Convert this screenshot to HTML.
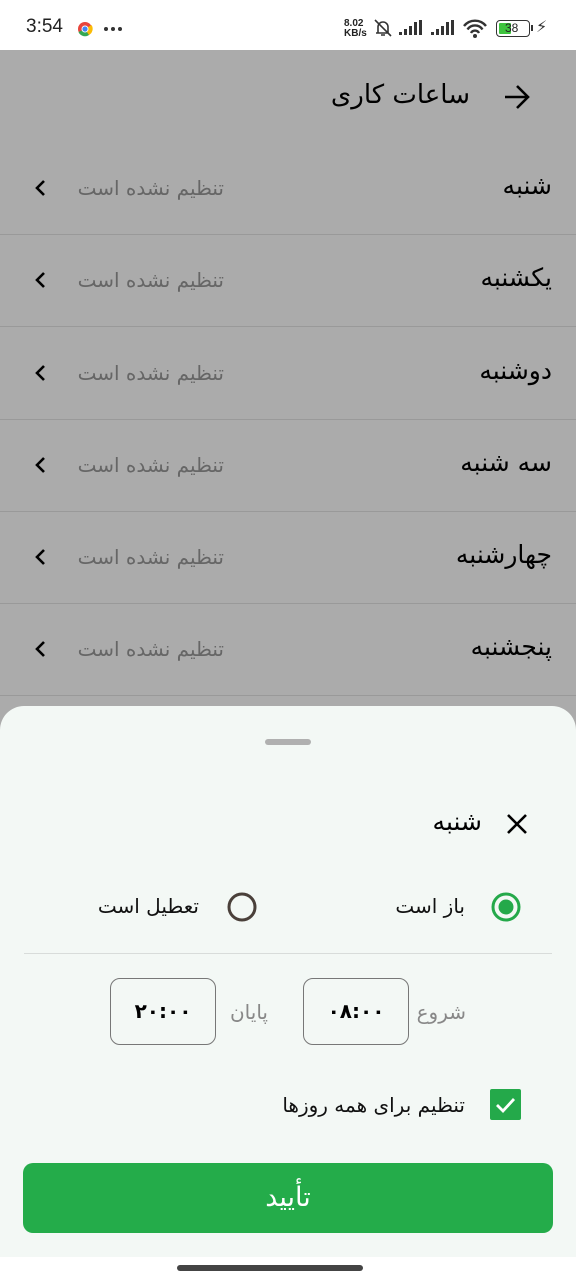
<!DOCTYPE html>
<html><head><meta charset="utf-8"><style>
*{margin:0;padding:0;box-sizing:border-box}
body{width:576px;height:1280px;position:relative;overflow:hidden;background:#ababab;font-family:"DejaVu Sans","Liberation Sans",sans-serif;}
.a{position:absolute}
.fa{direction:rtl;white-space:nowrap}
.row{position:absolute;left:0;width:576px;height:92px;border-bottom:1px solid #999}
.day{position:absolute;right:24px;top:28px;font-size:25px;color:#000;direction:rtl}
.st{position:absolute;right:352px;top:33px;font-size:20px;color:#666;direction:rtl}
.chev{position:absolute;left:34px;top:36px}
</style></head><body>
<div class="a" style="left:0;top:0;width:576px;height:50px;background:#fff"></div>
<div class="a" style="left:26px;top:16px;font-size:19px;font-family:'Liberation Sans',sans-serif;color:#222">3:54</div>
<svg class="a" style="left:77px;top:21px" width="16" height="16"><circle cx="8" cy="8" r="7" fill="#e8453c"/><path d="M8 8 L1.5 11 A7 7 0 0 0 12 14 Z" fill="#34a853"/><path d="M8 8 L12 14 A7 7 0 0 0 14.5 4 Z" fill="#fbbc05"/><circle cx="8" cy="8" r="3.5" fill="#fff"/><circle cx="8" cy="8" r="2.6" fill="#4285f4"/></svg>
<svg class="a" style="left:103px;top:26px" width="20" height="6"><circle cx="3" cy="3" r="2" fill="#333"/><circle cx="10" cy="3" r="2" fill="#333"/><circle cx="17" cy="3" r="2" fill="#333"/></svg>
<div class="a" style="left:344px;top:19px;font-size:10px;line-height:10px;font-weight:bold;font-family:'Liberation Sans',sans-serif;color:#222">8.02<br>KB/s</div>
<svg class="a" style="left:372px;top:18px" width="22" height="20"><path d="M6 15 V9 a5 5 0 0 1 10 0 V15 H4 M9 17 h4 M3 2 L19 18" stroke="#333" stroke-width="1.6" fill="none"/></svg>
<svg class="a" style="left:398px;top:20px" width="28" height="16"><rect x="1" y="12" width="3" height="3" fill="#333"/><rect x="6" y="9" width="3" height="6" fill="#333"/><rect x="11" y="6" width="3" height="9" fill="#333"/><rect x="16" y="2" width="3" height="13" fill="#333"/><rect x="21" y="0" width="3" height="15" fill="#333"/></svg>
<svg class="a" style="left:430px;top:20px" width="28" height="16"><rect x="1" y="12" width="3" height="3" fill="#333"/><rect x="6" y="9" width="3" height="6" fill="#333"/><rect x="11" y="6" width="3" height="9" fill="#333"/><rect x="16" y="2" width="3" height="13" fill="#333"/><rect x="21" y="0" width="3" height="15" fill="#333"/></svg>
<svg class="a" style="left:462px;top:19px" width="28" height="20"><path d="M2 7 a14 14 0 0 1 22 0 M5.5 10.5 a9 9 0 0 1 15 0 M9 14 a4.5 4.5 0 0 1 8 0" stroke="#333" stroke-width="2.4" fill="none"/><circle cx="13" cy="17" r="2" fill="#333"/></svg>
<div class="a" style="left:496px;top:20px;width:34px;height:17px;border:1.6px solid #333;border-radius:4px"></div>
<div class="a" style="left:499px;top:23px;width:12px;height:11px;background:#3ec43e;border-radius:1px"></div>
<div class="a" style="left:505px;top:20px;font-size:12px;color:#222;font-family:'Liberation Sans',sans-serif;line-height:17px">38</div>
<div class="a" style="left:531px;top:25px;width:2px;height:6px;background:#333"></div>
<div class="a" style="left:536px;top:17px;font-size:16px;color:#333">⚡</div>

<div class="a fa" style="right:106px;top:80px;font-size:26px;color:#000">ساعات کاری</div>
<svg class="a" style="left:502px;top:84px" width="30" height="26"><path d="M3 13 H26 M15 2 L26 13 L15 24" stroke="#000" stroke-width="2.6" fill="none"/></svg>

<div class="row" style="top:143px"><div class="day">شنبه</div><div class="st">تنظیم نشده است</div><svg class="chev" width="12" height="18"><path d="M10 2 L3 9 L10 16" stroke="#000" stroke-width="2.6" fill="none"/></svg></div>
<div class="row" style="top:235px"><div class="day">یکشنبه</div><div class="st">تنظیم نشده است</div><svg class="chev" width="12" height="18"><path d="M10 2 L3 9 L10 16" stroke="#000" stroke-width="2.6" fill="none"/></svg></div>
<div class="row" style="top:328px"><div class="day">دوشنبه</div><div class="st">تنظیم نشده است</div><svg class="chev" width="12" height="18"><path d="M10 2 L3 9 L10 16" stroke="#000" stroke-width="2.6" fill="none"/></svg></div>
<div class="row" style="top:420px"><div class="day">سه شنبه</div><div class="st">تنظیم نشده است</div><svg class="chev" width="12" height="18"><path d="M10 2 L3 9 L10 16" stroke="#000" stroke-width="2.6" fill="none"/></svg></div>
<div class="row" style="top:512px"><div class="day">چهارشنبه</div><div class="st">تنظیم نشده است</div><svg class="chev" width="12" height="18"><path d="M10 2 L3 9 L10 16" stroke="#000" stroke-width="2.6" fill="none"/></svg></div>
<div class="row" style="top:604px"><div class="day">پنجشنبه</div><div class="st">تنظیم نشده است</div><svg class="chev" width="12" height="18"><path d="M10 2 L3 9 L10 16" stroke="#000" stroke-width="2.6" fill="none"/></svg></div>

<div class="a" style="left:0;top:706px;width:576px;height:551px;background:#f3f8f5;border-radius:24px 24px 0 0"></div>
<div class="a" style="left:265px;top:739px;width:46px;height:6px;border-radius:3px;background:#b0b0b0"></div>
<div class="a fa" style="right:94px;top:807px;font-size:25px;color:#000">شنبه</div>
<svg class="a" style="left:505px;top:812px" width="24" height="24"><path d="M3 3 L21 21 M21 3 L3 21" stroke="#000" stroke-width="2.6"/></svg>

<svg class="a" style="left:489px;top:890px" width="34" height="34"><circle cx="17" cy="17" r="13" stroke="#24a94a" stroke-width="3" fill="none"/><circle cx="17" cy="17" r="7.5" fill="#24a94a"/></svg>
<div class="a fa" style="right:111px;top:894px;font-size:20px;color:#111">باز است</div>
<svg class="a" style="left:225px;top:890px" width="34" height="34"><circle cx="17" cy="17" r="13" stroke="#4a403a" stroke-width="3" fill="none"/></svg>
<div class="a fa" style="right:377px;top:894px;font-size:20px;color:#111">تعطیل است</div>
<div class="a" style="left:24px;top:953px;width:528px;height:1px;background:#d8dcda"></div>

<div class="a fa" style="right:110px;top:1000px;font-size:20px;color:#888">شروع</div>
<div class="a" style="left:303px;top:978px;width:106px;height:67px;border:1.5px solid #777;border-radius:10px;text-align:center;line-height:64px;font-size:20px;font-weight:bold;color:#000">۰۸:۰۰</div>
<div class="a fa" style="right:308px;top:1000px;font-size:20px;color:#888">پایان</div>
<div class="a" style="left:110px;top:978px;width:106px;height:67px;border:1.5px solid #777;border-radius:10px;text-align:center;line-height:64px;font-size:20px;font-weight:bold;color:#000">۲۰:۰۰</div>

<div class="a" style="left:490px;top:1089px;width:31px;height:31px;background:#24a94a;border-radius:2px"></div>
<svg class="a" style="left:490px;top:1089px" width="31" height="31"><path d="M7 16 L13 22 L24 10" stroke="#fff" stroke-width="2.8" fill="none"/></svg>
<div class="a fa" style="right:111px;top:1093px;font-size:20px;color:#111">تنظیم برای همه روزها</div>

<div class="a" style="left:23px;top:1163px;width:530px;height:70px;background:#24ac4a;border-radius:10px;text-align:center;line-height:70px;font-size:27px;color:#fff;direction:rtl">تأیید</div>

<div class="a" style="left:0;top:1257px;width:576px;height:23px;background:#fff"></div>
<div class="a" style="left:177px;top:1265px;width:186px;height:6px;border-radius:3px;background:#444"></div>
</body></html>
